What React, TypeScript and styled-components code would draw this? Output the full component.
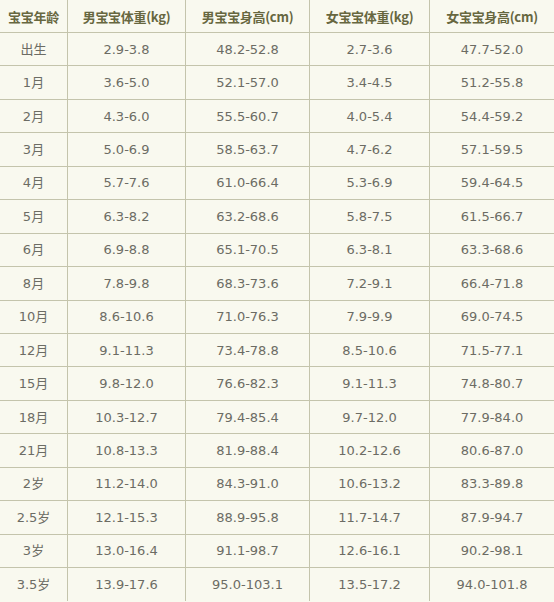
import React from "react";
import styled, { createGlobalStyle } from "styled-components";

const Global = createGlobalStyle`
  html, body { margin: 0; padding: 0; background: #f9f9ef; }
  #root { width: 554px; height: 602px; overflow: hidden; }
`;

const Grid = styled.div`
  display: grid;
  grid-template-columns: 68px 118px 124px 120px 124px;
  grid-template-rows: 33px repeat(17, 33.44px);
  width: 554px;
  background: #f9f9ef;
`;

const Cell = styled.div<{ $head?: boolean; $lastCol?: boolean; $lastRow?: boolean }>`
  display: flex;
  align-items: center;
  justify-content: center;
  box-sizing: border-box;
  border-right: ${(p) => (p.$lastCol ? "none" : "1px solid #c4c4ac")};
  border-bottom: ${(p) => (p.$lastRow ? "none" : "1px solid #c4c4ac")};
  font-family: ${(p) =>
    p.$head
      ? '"Noto Sans CJK SC", sans-serif'
      : '"DejaVu Sans", "Noto Sans CJK SC", sans-serif'};
  font-size: 13px;
  line-height: 15px;
  font-weight: ${(p) => (p.$head ? 700 : 400)};
  color: ${(p) => (p.$head ? "#67673f" : "#6c6c64")};
  white-space: nowrap;
  letter-spacing: ${(p) => (p.$head ? "-0.3px" : "0")};
`;

const Text = styled.span`
  display: block;
  line-height: 15px;
`;

const header = ["宝宝年龄", "男宝宝体重(kg)", "男宝宝身高(cm)", "女宝宝体重(kg)", "女宝宝身高(cm)"];

const rows: string[][] = [
  ["出生", "2.9-3.8", "48.2-52.8", "2.7-3.6", "47.7-52.0"],
  ["1月", "3.6-5.0", "52.1-57.0", "3.4-4.5", "51.2-55.8"],
  ["2月", "4.3-6.0", "55.5-60.7", "4.0-5.4", "54.4-59.2"],
  ["3月", "5.0-6.9", "58.5-63.7", "4.7-6.2", "57.1-59.5"],
  ["4月", "5.7-7.6", "61.0-66.4", "5.3-6.9", "59.4-64.5"],
  ["5月", "6.3-8.2", "63.2-68.6", "5.8-7.5", "61.5-66.7"],
  ["6月", "6.9-8.8", "65.1-70.5", "6.3-8.1", "63.3-68.6"],
  ["8月", "7.8-9.8", "68.3-73.6", "7.2-9.1", "66.4-71.8"],
  ["10月", "8.6-10.6", "71.0-76.3", "7.9-9.9", "69.0-74.5"],
  ["12月", "9.1-11.3", "73.4-78.8", "8.5-10.6", "71.5-77.1"],
  ["15月", "9.8-12.0", "76.6-82.3", "9.1-11.3", "74.8-80.7"],
  ["18月", "10.3-12.7", "79.4-85.4", "9.7-12.0", "77.9-84.0"],
  ["21月", "10.8-13.3", "81.9-88.4", "10.2-12.6", "80.6-87.0"],
  ["2岁", "11.2-14.0", "84.3-91.0", "10.6-13.2", "83.3-89.8"],
  ["2.5岁", "12.1-15.3", "88.9-95.8", "11.7-14.7", "87.9-94.7"],
  ["3岁", "13.0-16.4", "91.1-98.7", "12.6-16.1", "90.2-98.1"],
  ["3.5岁", "13.9-17.6", "95.0-103.1", "13.5-17.2", "94.0-101.8"],
];

export default function App() {
  return (
    <>
      <Global />
      <Grid>
        {header.map((h, i) => (
          <Cell key={"h" + i} $head $lastCol={i === 4}>
            <Text>{h}</Text>
          </Cell>
        ))}
        {rows.map((r, ri) =>
          r.map((c, ci) => (
            <Cell key={ri + "-" + ci} $lastCol={ci === 4} $lastRow={ri === rows.length - 1}>
              <Text>{c}</Text>
            </Cell>
          ))
        )}
      </Grid>
    </>
  );
}
